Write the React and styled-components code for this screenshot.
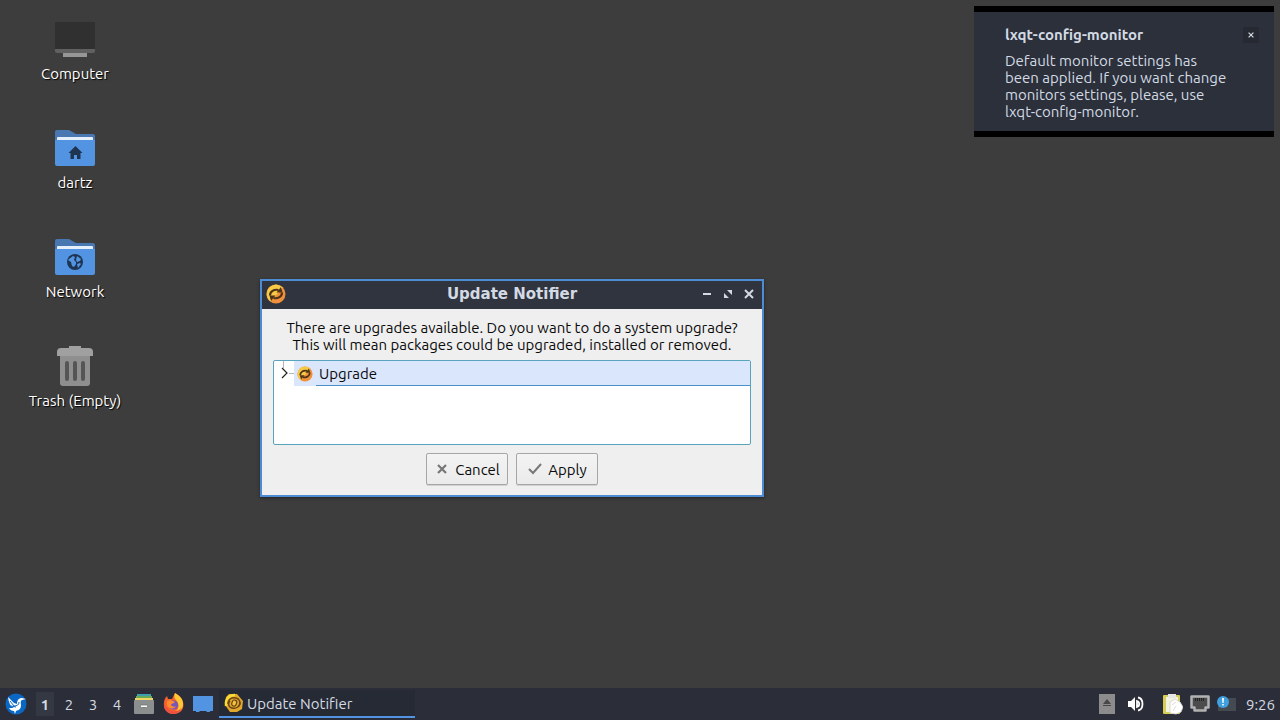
import React from "react";
import styled, { createGlobalStyle } from "styled-components";

const GlobalStyle = createGlobalStyle`
  * { box-sizing: border-box; }
  body {
    margin: 0;
    background: #3d3d3d;
    font-family: Ubuntu, "Noto Sans", sans-serif;
    font-size: 15px;
    line-height: 17px;
  }
  button {
    margin: 0;
    padding: 0;
    border: 0;
    background: none;
    color: inherit;
    font: inherit;
  }
  svg { display: block; flex: none; }
`;

const Screen = styled.div`
  position: relative;
  display: flex;
  flex-direction: column;
  min-height: 100vh;
`;

const Desktop = styled.main`
  flex: 1;
`;

const IconColumn = styled.div`
  display: flex;
  flex-direction: column;
  width: 150px;
`;

const DesktopItem = styled.button`
  display: flex;
  flex-direction: column;
  align-items: center;
  gap: 6px;
  height: 109px;
  padding-top: 19px;
  color: #fff;
  text-shadow: 1px 1px 1px #000;
  white-space: nowrap;
`;

const Notification = styled.aside`
  position: absolute;
  top: 6px;
  right: 6px;
  width: 300px;
  padding: 14px 15px 11px 31px;
  border: solid #000;
  border-width: 6px 0;
  background: #2b303b;
  color: #d3dae3;
`;

const NoticeHead = styled.header`
  display: flex;
  align-items: center;
  justify-content: space-between;
  margin-bottom: 9px;
`;

const NoticeTitle = styled.h2`
  margin: 0;
  font-size: 15px;
  font-weight: 700;
`;

const NoticeClose = styled.button`
  display: grid;
  place-items: center;
  width: 16px;
  height: 16px;
  border-radius: 2px;
  background: #262932;
`;

const NoticeText = styled.p`
  width: 232px;
  margin: 0;
`;

const Dialog = styled.section`
  position: absolute;
  top: 279px;
  left: 260px;
  width: 504px;
  border: 2px solid #4b8cd5;
  background: #efefef;
  color: #0a0a0a;
  box-shadow: 0 1px 3px rgba(0, 0, 0, 0.4);
`;

const TitleBar = styled.header`
  display: grid;
  grid-template-columns: 66px 1fr 66px;
  align-items: center;
  height: 28px;
  padding-bottom: 2px;
  background: #2f343f;
  color: #d3dae3;
`;

const TitleIcon = styled.span`
  padding-left: 4px;
`;

const DialogTitle = styled.h1`
  margin: 0;
  font: 700 15px/17px "DejaVu Sans", sans-serif;
  text-align: center;
`;

const WindowButtons = styled.div`
  display: flex;
  justify-content: flex-end;
  padding-right: 3px;
`;

const WindowButton = styled.button`
  display: grid;
  place-items: center;
  width: 21px;
  height: 20px;
`;

const DialogBody = styled.div`
  display: flex;
  flex-direction: column;
  gap: 7px;
  padding: 10px 11px;
`;

const Message = styled.p`
  margin: 0;
  text-align: center;
  white-space: nowrap;
`;

const Tree = styled.ul`
  height: 85px;
  margin: 0;
  padding: 0;
  list-style: none;
  border: 1px solid #58a3bd;
  border-radius: 2px;
  background: #fff;
`;

const TreeItem = styled.li`
  display: flex;
  height: 25px;
`;

const Selected = styled.div`
  display: flex;
  flex: 1;
  background: #dae6fc;
`;

const IconCell = styled.span`
  display: grid;
  place-items: center;
  width: 22px;
`;

const ItemLabel = styled.span`
  flex: 1;
  padding: 4px 3px 3px;
  border-bottom: 1px solid #4a90c8;
`;

const Actions = styled.div`
  display: flex;
  justify-content: center;
  gap: 8px;
  padding-top: 1px;
`;

const ActionButton = styled.button`
  display: flex;
  align-items: center;
  justify-content: center;
  gap: 5px;
  width: 82px;
  height: 32px;
  border: 1px solid #a6a6a6;
  border-radius: 2px;
  background: linear-gradient(#f3f3f3, #ebebeb);
  box-shadow: 0 1px 0 rgba(0, 0, 0, 0.12);
`;

const Panel = styled.footer`
  display: flex;
  align-items: center;
  justify-content: space-between;
  height: 32px;
  background: #2b2e39;
  color: #d3dae3;
`;

const PanelGroup = styled.div`
  display: flex;
  align-items: center;
  gap: ${(p) => p.$gap || 0}px;
  padding: ${(p) => p.$pad || "0"};
`;

const PagerButton = styled.button`
  width: 18px;
  height: 24px;
  background: ${(p) => (p.$active ? "#343843" : "none")};
  font-weight: ${(p) => (p.$active ? 700 : 400)};
`;

const TaskButton = styled.button`
  display: flex;
  align-items: center;
  gap: 3px;
  width: 196px;
  height: 28px;
  padding-left: 5px;
  border-bottom: 2px solid #5294e2;
  background: #262a34;
`;

const Clock = styled.time`
  padding: 0 5px 0 9px;
`;

const UpdateIcon = ({ size }) => (
  <svg width={size} height={size} viewBox="0 0 20 20" aria-hidden="true">
    <circle cx="10" cy="10" r="9.5" fill="#f08f3c" />
    <path d="M1.500 14A9.500 9.500 0 0 1 17 3.500L4.500 17.500a9 9 0 0 1-3-3.500z" fill="#f7c944" />
    <path d="M4 11.500C4 7.500 8 5 12.500 6" fill="none" stroke="#4d3218" strokeWidth="2.200" />
    <path d="M10.500 8.500L16.500 8.500 15 3z" fill="#4d3218" />
    <path d="M16 8.500c0 4-4 6.500-8.500 5.500" fill="none" stroke="#4d3218" strokeWidth="2.200" />
    <path d="M9.500 11.500L3.500 11.500 5 17z" fill="#4d3218" />
  </svg>
);

const TaskIcon = () => (
  <svg width="20" height="20" viewBox="0 0 20 20" aria-hidden="true">
    <path d="M5 1h8l6 7-1 8-5 3H6l-5-7 1-8z" fill="#e0a82c" />
    <path d="M2 13C1 6 5 2 11 2" fill="none" stroke="#f7dc35" strokeWidth="2.400" />
    <path d="M4 11C4 6 8 4 12 5s5 5 3 8" fill="none" stroke="#6b4316" strokeWidth="1.400" />
    <path d="M16 9c0 5-4 7-8 6s-4-5-2-7" fill="none" stroke="#6b4316" strokeWidth="1.400" />
    <rect x="8" y="7" width="4.500" height="6" rx="2" fill="#f0c43c" stroke="#6b4316" strokeWidth="1.200" transform="rotate(20 10 10)" />
  </svg>
);

const ComputerIcon = () => (
  <svg width="40" height="40" viewBox="0 0 40 40" aria-hidden="true">
    <rect y="3" width="40" height="28" rx="1" fill="#303030" />
    <path d="M0 30h40v2a2 2 0 0 1-2 2H2a2 2 0 0 1-2-2z" fill="#606060" />
    <rect x="8" y="34" width="24" height="4" fill="#969696" />
  </svg>
);

const Folder = ({ children }) => (
  <svg width="40" height="40" viewBox="0 0 40 40" aria-hidden="true">
    <path d="M0 4a2 2 0 0 1 2-2h12l7 4h17a2 2 0 0 1 2 2v14H0z" fill="#4877b1" />
    <rect x="2" y="9" width="36" height="8" rx="1" fill="#e4effb" />
    <path d="M0 12h40v24a2 2 0 0 1-2 2H2a2 2 0 0 1-2-2z" fill="#5294e2" />
    {children}
  </svg>
);

const HomeFolderIcon = () => (
  <Folder>
    <path d="M20.500 18l7 7h-2v6h-3.500v-4h-3v4h-3.500v-6h-2z" fill="#1d3551" />
  </Folder>
);

const NetworkFolderIcon = () => (
  <Folder>
    <circle cx="20" cy="25" r="8" fill="#1d3551" />
    <path d="M14 22l4-3 2 1-1 3 2 2v2l-2 3-2-1-1-4-3-2z" fill="#5294e2" />
    <path d="M22 19l4 3-1 2-3 1-1-2zM22 27l3-1 1 1-3 4z" fill="#5294e2" />
  </Folder>
);

const TrashIcon = () => (
  <svg width="40" height="40" viewBox="0 0 40 40" aria-hidden="true">
    <path d="M5 9h30v28a3 3 0 0 1-3 3H8a3 3 0 0 1-3-3z" fill="#8f8f8f" />
    <path d="M14 0h12v2h8a4 4 0 0 1 4 4v4H2V6a4 4 0 0 1 4-4h8z" fill="#a0a0a0" />
    <path d="M12 17v16M20 17v16M28 17v16" stroke="#555" strokeWidth="4" strokeLinecap="round" />
  </svg>
);

const Cross = ({ size, width, color }) => (
  <svg width={size} height={size} viewBox="0 0 10 10" aria-hidden="true">
    <path d="M1 1l8 8M9 1L1 9" stroke={color} strokeWidth={width} fill="none" />
  </svg>
);

const TreeLines = () => (
  <svg width="20" height="25" viewBox="0 0 20 25" aria-hidden="true">
    <path d="M9.500 0v7M15 12.500h5" stroke="#b5b5b5" fill="none" />
    <path d="M8 7l5 5-5 5" stroke="#222" strokeWidth="1.200" fill="none" />
  </svg>
);

const StartIcon = () => (
  <svg width="22" height="22" viewBox="0 0 22 22" aria-hidden="true">
    <circle cx="11" cy="11" r="10.500" fill="#0a68c4" />
    <path d="M3 4l6 6 3 1c0-4 2-6 5-6l4 1-4 1c-2 1-1 3-1 5 0 4-2 5-5 6l-1 3-1-3c-2 0-4-1-5-3l5 0c-4-2-5-5-6-11z" fill="#fff" />
    <path d="M5 8l4 5c3 0 5-1 5-4M6 13l5 1" fill="none" stroke="#0a68c4" />
  </svg>
);

const FilesIcon = () => (
  <svg width="20" height="20" viewBox="0 0 20 20" aria-hidden="true">
    <rect x="3" width="14" height="3" fill="#3f9fae" />
    <rect x="2" y="2" width="16" height="3" fill="#66a956" />
    <rect x="1" y="4" width="18" height="4" fill="#f0d566" />
    <rect y="6" width="20" height="14" rx="1" fill="#8b8f8e" />
    <rect x="6.500" y="11" width="7" height="2.500" rx="1" fill="#fff" stroke="#6e7170" strokeWidth=".8" />
  </svg>
);

const FirefoxIcon = () => (
  <svg width="21" height="22" viewBox="0 0 21 22" aria-hidden="true">
    <path d="M12 0c4 2 7 5 8 9 2 7-3 12-9 12S0 17 1 10c0-3 1-5 3-7l1 3 4 0c1-2 2-4 3-6z" fill="#f5642f" />
    <path d="M12 0c5 3 8 6 8 11s-4 8-8 8c4-2 5-8 1-12-2-2-2-4-1-7z" fill="#ffc935" />
    <path d="M1 9c1 5 4 8 9 9s8-2 8-4c0 4-3 7-8 7S0 17 1 9z" fill="#f0503f" />
    <circle cx="10.500" cy="12" r="4.600" fill="#7655bd" />
    <path d="M4 8c3-2 6 0 8 1-1 2-4 1-4 3 1 2 4 2 5 1-2 4-8 3-9-1z" fill="#ff8b2d" />
  </svg>
);

const ShowDesktopIcon = () => (
  <svg width="20" height="18" viewBox="0 0 20 18" aria-hidden="true">
    <path d="M0 1h20v15h-3v1h-3l-1-1H7l-1 1H3v-1H0z" fill="#5294e2" />
  </svg>
);

const EjectIcon = () => (
  <svg width="16" height="20" viewBox="0 0 16 20" aria-hidden="true">
    <rect width="16" height="20" fill="#8c8c8c" />
    <path d="M8 5l4 5H4zM4 11h8v1H4z" fill="#474747" />
  </svg>
);

const VolumeIcon = () => (
  <svg width="18" height="16" viewBox="0 0 18 16" aria-hidden="true">
    <path d="M1 5h3l4-4v14l-4-4H1z" fill="#fff" />
    <path d="M10 5c3 1 3 5 0 6zM11 1.500c6 1 6 12 0 13" fill="none" stroke="#fff" strokeWidth="1.800" />
  </svg>
);

const ClipboardIcon = () => (
  <svg width="21" height="22" viewBox="0 0 21 22" aria-hidden="true">
    <rect x="1" y="2" width="17" height="19" rx="1" fill="#d6cf55" />
    <path d="M4 4h12v15H4z" fill="#f4f3df" />
    <path d="M6 1h8v4H6z" fill="#e7e7e7" />
    <path d="M8 9l5-3 5 3 3 5-2 5-5 2-6-1z" fill="#fff" stroke="#d2d2cc" strokeWidth=".8" />
    <path d="M10 12l4-3M14 13l-3 5" fill="none" stroke="#ddd" />
  </svg>
);

const EthernetIcon = () => (
  <svg width="20" height="18" viewBox="0 0 20 18" aria-hidden="true">
    <path d="M1.500 1.500h17v11h-3v3h-11v-3h-3z" fill="#4c4c4c" stroke="#b2b2b2" strokeWidth="2.500" strokeLinejoin="round" />
    <path d="M5.500 3v3M7.500 3v3M9.500 3v3M11.500 3v3M13.500 3v3" stroke="#222" />
  </svg>
);

const NotifierIcon = () => (
  <svg width="20" height="20" viewBox="0 0 20 20" aria-hidden="true">
    <path d="M6 4h13v13H1v-5z" fill="#454a50" />
    <circle cx="6" cy="8" r="6" fill="#3fa0df" />
    <path d="M5 4h2l-.400 5H5.400zM5.200 10h1.600v1.600H5.200z" fill="#fff" />
  </svg>
);

const desktopItems = [
  { label: "Computer", Icon: ComputerIcon },
  { label: "dartz", Icon: HomeFolderIcon },
  { label: "Network", Icon: NetworkFolderIcon },
  { label: "Trash (Empty)", Icon: TrashIcon },
];

export default function App() {
  return (
    <Screen>
      <GlobalStyle />
      <Desktop>
        <IconColumn>
          {desktopItems.map(({ label, Icon }) => (
            <DesktopItem key={label}>
              <Icon />
              {label}
            </DesktopItem>
          ))}
        </IconColumn>
      </Desktop>

      <Notification>
        <NoticeHead>
          <NoticeTitle>lxqt-config-monitor</NoticeTitle>
          <NoticeClose aria-label="Dismiss">
            <Cross size={6} width={2} color="#d3dae3" />
          </NoticeClose>
        </NoticeHead>
        <NoticeText>
          Default monitor settings has<br />
          been applied. If you want change<br />
          monitors settings, please, use<br />
          lxqt-config-monitor.
        </NoticeText>
      </Notification>

      <Dialog role="dialog" aria-labelledby="dialog-title">
        <TitleBar>
          <TitleIcon><UpdateIcon size={20} /></TitleIcon>
          <DialogTitle id="dialog-title">Update Notifier</DialogTitle>
          <WindowButtons>
            <WindowButton aria-label="Minimize">
              <svg width="10" height="10" viewBox="0 0 10 10" aria-hidden="true">
                <path d="M1 4h8v2H1z" fill="#d3dae3" />
              </svg>
            </WindowButton>
            <WindowButton aria-label="Maximize">
              <svg width="10" height="10" viewBox="0 0 10 10" aria-hidden="true">
                <path d="M4 1h5v5zM1 4l5 5H1z" fill="#d3dae3" />
              </svg>
            </WindowButton>
            <WindowButton aria-label="Close">
              <Cross size={10} width={2} color="#d3dae3" />
            </WindowButton>
          </WindowButtons>
        </TitleBar>
        <DialogBody>
          <Message>
            There are upgrades available. Do you want to do a system upgrade?<br />
            This will mean packages could be upgraded, installed or removed.
          </Message>
          <Tree role="tree">
            <TreeItem role="treeitem" aria-selected="true" aria-expanded="false">
              <TreeLines />
              <Selected>
                <IconCell><UpdateIcon size={16} /></IconCell>
                <ItemLabel>Upgrade</ItemLabel>
              </Selected>
            </TreeItem>
          </Tree>
          <Actions>
            <ActionButton>
              <svg width="16" height="16" viewBox="0 0 16 16" aria-hidden="true">
                <path d="M4 4l8 8M12 4l-8 8" stroke="#777" strokeWidth="2.200" />
              </svg>
              Cancel
            </ActionButton>
            <ActionButton>
              <svg width="16" height="16" viewBox="0 0 16 16" aria-hidden="true">
                <path d="M2 8l4 4 8-9" fill="none" stroke="#777" strokeWidth="2" />
              </svg>
              Apply
            </ActionButton>
          </Actions>
        </DialogBody>
      </Dialog>

      <Panel>
        <PanelGroup>
          <PanelGroup as="button" $pad="0 9px 0 5px" aria-label="Menu"><StartIcon /></PanelGroup>
          <PanelGroup $gap={6}>
            {[1, 2, 3, 4].map((n) => (
              <PagerButton key={n} $active={n === 1}>{n}</PagerButton>
            ))}
          </PanelGroup>
          <PanelGroup $gap={9} $pad="0 6px 0 8px">
            <button aria-label="Files"><FilesIcon /></button>
            <button aria-label="Firefox"><FirefoxIcon /></button>
            <button aria-label="Show desktop"><ShowDesktopIcon /></button>
          </PanelGroup>
          <TaskButton><TaskIcon />Update Notifier</TaskButton>
        </PanelGroup>
        <PanelGroup>
          <PanelGroup $gap={12}>
            <button aria-label="Removable media"><EjectIcon /></button>
            <button aria-label="Volume"><VolumeIcon /></button>
          </PanelGroup>
          <PanelGroup $gap={7} $pad="0 0 0 17px">
            <button aria-label="Clipboard"><ClipboardIcon /></button>
            <button aria-label="Network"><EthernetIcon /></button>
            <button aria-label="Updates"><NotifierIcon /></button>
          </PanelGroup>
          <Clock>9:26</Clock>
        </PanelGroup>
      </Panel>
    </Screen>
  );
}
